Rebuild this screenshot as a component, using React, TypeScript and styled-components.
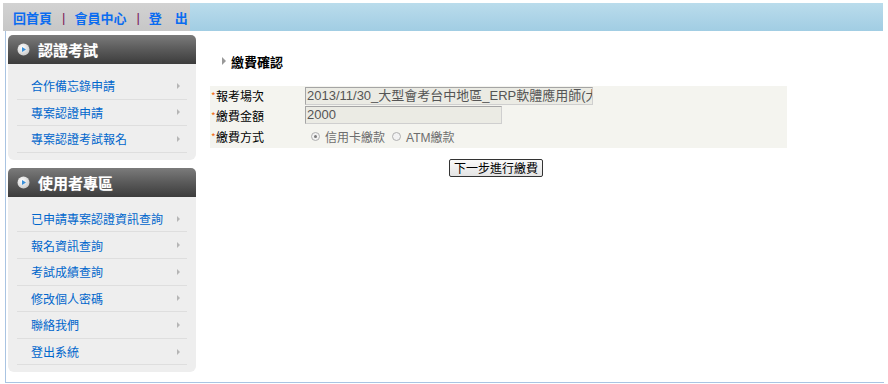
import React from "react";
import styled, { createGlobalStyle } from "styled-components";

const GlobalStyle = createGlobalStyle`
  html, body { margin: 0; padding: 0; background: #ffffff; }
  body {
    font-family: "Liberation Sans", Arial, "Noto Sans CJK TC", sans-serif;
    font-size: 12px;
    color: #000;
  }
`;

const Page = styled.div`
  width: 888px;
  height: 384px;
  overflow: hidden;
  background: #fff;
`;

const TopBar = styled.div`
  display: flex;
  margin: 3px 0 0 3px;
  width: 880px;
  height: 28px;
`;

const NavBox = styled.div`
  width: 177px;
  padding-left: 10px;
  display: flex;
  align-items: center;
  background: linear-gradient(#d2d2d2, #c7c7c7);
`;

const NavLink = styled.a`
  font-family: "Liberation Sans", "Noto Sans CJK TC", sans-serif;
  font-size: 13px;
  font-weight: bold;
  color: #0b6cf0;
  text-decoration: none;
  white-space: pre;
`;

const NavSep = styled.span`
  font-size: 13px;
  color: #7a1a5a;
  margin: 0 9px 0 10px;
`;

const BlueBand = styled.div`
  flex: 1;
  background: linear-gradient(#badcec, #a1cde3);
`;

const Body = styled.div`
  display: flex;
  margin-left: 5px;
  width: 878px;
  height: 347px;
  border-left: 1px solid #a9c4e2;
  border-bottom: 1px solid #a9c4e2;
  padding-top: 4px;
  box-sizing: content-box;
`;

const Sidebar = styled.div`
  width: 188px;
  margin-left: 2px;
  display: flex;
  flex-direction: column;
  gap: 8px;
`;

const Section = styled.div`
  display: flex;
  flex-direction: column;
`;

const SectionHead = styled.div`
  height: 29px;
  display: flex;
  align-items: center;
  padding-left: 9px;
  gap: 8px;
  border-radius: 5px 5px 0 0;
  background: linear-gradient(#7b7b7b, #5a5a5a 50%, #3c3c3c);
  color: #fff;
  font-family: "Noto Sans CJK TC", sans-serif;
  font-size: 15px;
  font-weight: bold;
  text-shadow: 0 0 1px rgba(255, 255, 255, 0.4);
`;

const MenuBox = styled.ul`
  list-style: none;
  margin: 0;
  padding: 9px 9px 7px;
  background: #eeeeee;
  border-radius: 0 0 6px 6px;
`;

const MenuItem = styled.li`
  height: 25.6px;
  border-bottom: 1px solid #dedede;
  display: flex;
  align-items: center;
  justify-content: space-between;
  padding: 0 7px 0 14px;
`;

const MenuLink = styled.a`
  font-family: "Noto Sans CJK TC", sans-serif;
  font-size: 12px;
  color: #0066cc;
  text-decoration: none;
`;

const Arrow = styled.span`
  width: 0;
  height: 0;
  border-left: 3px solid #b5b5b5;
  border-top: 3px solid transparent;
  border-bottom: 3px solid transparent;
`;

const Main = styled.div`
  flex: 1;
  padding-left: 14px;
`;

const Heading = styled.div`
  margin-top: 16px;
  height: 20px;
  display: flex;
  align-items: center;
  padding-left: 12px;
  gap: 5px;
  font-family: "Noto Sans CJK TC", sans-serif;
  font-size: 13px;
  font-weight: bold;
`;

const HeadArrow = styled.span`
  width: 0;
  height: 0;
  border-left: 4px solid #999;
  border-top: 4px solid transparent;
  border-bottom: 4px solid transparent;
`;

const Form = styled.div`
  margin-top: 15px;
  width: 577px;
  background: #f4f4ef;
  display: flex;
  flex-direction: column;
`;

const Row = styled.div<{ $h: number }>`
  height: ${(p) => p.$h}px;
  display: flex;
  align-items: center;
`;

const Label = styled.div`
  width: 95px;
  display: flex;
  align-items: center;
  font-family: "Noto Sans CJK TC", sans-serif;
  font-size: 12px;
`;

const Star = styled.span`
  color: #f06a10;
  font-size: 10px;
  width: 5px;
  margin-left: 1px;
`;

const Field = styled.div<{ $w: number }>`
  width: ${(p) => p.$w}px;
  height: 18px;
  box-sizing: border-box;
  border: 1px solid #a5a5a5;
  border-right-color: #cfcfcf;
  border-bottom-color: #cfcfcf;
  background: #ebebe4;
  color: #555;
  font-family: "Liberation Sans", "Noto Sans CJK TC", sans-serif;
  font-size: 13px;
  line-height: 16px;
  padding-left: 1px;
  white-space: nowrap;
  overflow: hidden;
`;

const Radios = styled.div`
  display: flex;
  align-items: center;
  padding-left: 6px;
  gap: 5px;
  color: #6d6d6d;
  font-family: "Liberation Sans", "Noto Sans CJK TC", sans-serif;
  font-size: 12px;
`;

const Radio = styled.span<{ $on?: boolean }>`
  width: 9px;
  height: 9px;
  box-sizing: border-box;
  border-radius: 50%;
  border: 1px solid #b0b0b0;
  background: #f2f2f2;
  display: flex;
  align-items: center;
  justify-content: center;
  &::after {
    content: "";
    width: 3px;
    height: 3px;
    border-radius: 50%;
    background: ${(p) => (p.$on ? "#7a7a7a" : "transparent")};
  }
`;

const RadioText = styled.span`
  margin-right: 2px;
`;

const ButtonRow = styled.div`
  width: 577px;
  display: flex;
  justify-content: center;
  margin-top: 11px;
`;

const Button = styled.button`
  height: 18px;
  padding: 0 4px;
  margin-right: 5px;
  border: 1px solid #333;
  border-radius: 2px;
  background: linear-gradient(#fafafa, #e4e4e4);
  font-family: "Noto Sans CJK TC", sans-serif;
  font-size: 12px;
  line-height: 14px;
  color: #000;
`;

const PlayIcon = () => (
  <svg width="13" height="13" viewBox="0 0 13 13">
    <defs>
      <radialGradient id="g" cx="40%" cy="35%" r="70%">
        <stop offset="0%" stopColor="#ffffff" />
        <stop offset="100%" stopColor="#c9c9c9" />
      </radialGradient>
    </defs>
    <circle cx="6.5" cy="6.5" r="6" fill="url(#g)" />
    <path d="M5 4 L9 6.5 L5 9 Z" fill="#3a8fd8" />
  </svg>
);

const menu1 = ["合作備忘錄申請", "專案認證申請", "專案認證考試報名"];
const menu2 = ["已申請專案認證資訊查詢", "報名資訊查詢", "考試成績查詢", "修改個人密碼", "聯絡我們", "登出系統"];

export default function App() {
  return (
    <Page>
      <GlobalStyle />
      <TopBar>
        <NavBox>
          <NavLink>回首頁</NavLink>
          <NavSep>|</NavSep>
          <NavLink>會員中心</NavLink>
          <NavSep>|</NavSep>
          <NavLink>登　出</NavLink>
        </NavBox>
        <BlueBand />
      </TopBar>
      <Body>
        <Sidebar>
          <Section>
            <SectionHead>
              <PlayIcon />
              認證考試
            </SectionHead>
            <MenuBox>
              {menu1.map((m) => (
                <MenuItem key={m}>
                  <MenuLink>{m}</MenuLink>
                  <Arrow />
                </MenuItem>
              ))}
            </MenuBox>
          </Section>
          <Section>
            <SectionHead>
              <PlayIcon />
              使用者專區
            </SectionHead>
            <MenuBox>
              {menu2.map((m) => (
                <MenuItem key={m}>
                  <MenuLink>{m}</MenuLink>
                  <Arrow />
                </MenuItem>
              ))}
            </MenuBox>
          </Section>
        </Sidebar>
        <Main>
          <Heading>
            <HeadArrow />
            繳費確認
          </Heading>
          <Form>
            <Row $h={19}>
              <Label>
                <Star>*</Star>報考場次
              </Label>
              <Field $w={288}>2013/11/30_大型會考台中地區_ERP軟體應用師(大型會考)</Field>
            </Row>
            <Row $h={20}>
              <Label>
                <Star>*</Star>繳費金額
              </Label>
              <Field $w={197}>2000</Field>
            </Row>
            <Row $h={23}>
              <Label>
                <Star>*</Star>繳費方式
              </Label>
              <Radios>
                <Radio $on />
                <RadioText>信用卡繳款</RadioText>
                <Radio />
                <RadioText>ATM繳款</RadioText>
              </Radios>
            </Row>
          </Form>
          <ButtonRow>
            <Button>下一步進行繳費</Button>
          </ButtonRow>
        </Main>
      </Body>
    </Page>
  );
}
